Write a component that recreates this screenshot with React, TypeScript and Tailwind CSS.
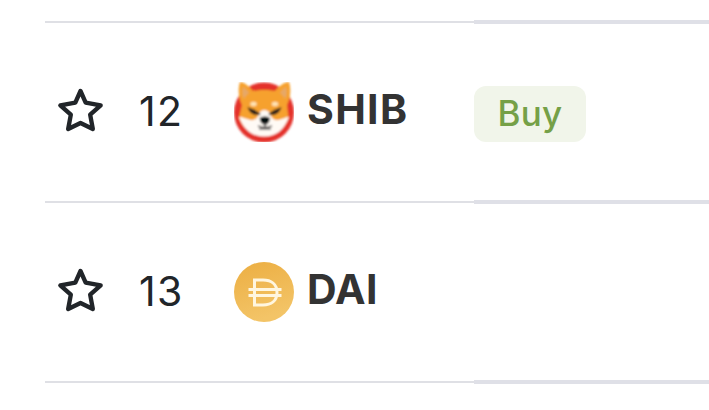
import React from "react";

function Star() {
  return (
    <svg viewBox="51 51 141 141" className="h-[47px] w-[47px]" fill="none" stroke="#212529" strokeWidth="13" strokeLinejoin="round">
      <path d="M121.5 63L137 98L182 106L150.500 134L158.500 177L121.500 159L84.500 177L92.500 134L61 106L106 98Z" />
    </svg>
  );
}

function ShibIcon() {
  return (
    <svg viewBox="0 0 60 60" className="h-[60px] w-[60px]">
      <defs>
        <filter id="soft" x="-5%" y="-5%" width="110%" height="110%">
          <feGaussianBlur stdDeviation="0.850" />
        </filter>
      </defs>
      <g filter="url(#soft)">
        <circle cx="30" cy="30.500" r="30" fill="#e4302c" />
        <path d="M6 0C10 0 15 4 19 9C26 7.500 35 7.500 41 9C45 4 50 0 55 0C57 6 57 15 53 23L54.500 36C50 47 42 53.500 30 53.500C19 53.500 9 47 5 36L8 23C4 15 4 6 6 0Z" fill="#f6a12e" />
        <path d="M9 5C12 7 13 8 15 11C12 13 11 15 10 17C8 13 8 9 9 5ZM52 5C49 7 48 8 46 11C49 13 50 15 51 17C53 13 53 9 52 5Z" fill="#e6a868" />
        <path d="M5 35C9 35 12 37 16 38C22 39 24 35 26 30Q30 26 35 30C37 35 39 39 45 38C49 37 52 35 55 35C50 48 42 54.500 30 54.500C18 54.500 10 48 5 35Z" fill="#fffaf5" />
        <ellipse cx="19.500" cy="22" rx="3.200" ry="2.200" fill="#ffe4b4" />
        <ellipse cx="41" cy="22" rx="3.200" ry="2.200" fill="#ffe4b4" />
        <path d="M15 26.500C19 27.500 22 29 25 32Q18 33 15 26.500ZM46 26.500C42 27.500 39 29 36 32Q43 33 46 26.500Z" fill="#2a211d" stroke="#2a211d" strokeWidth="1.800" />
        <path d="M27 36.500Q31 35 34.500 36.500Q35 40 31 42Q27 40 27 36.500Z" fill="#05080d" stroke="#05080d" strokeWidth="2.400" />
        <path d="M31 41V45M24 44Q31 47 38 44M25 47H37" fill="none" stroke="#605c5b" strokeWidth="1.700" />
      </g>
    </svg>
  );
}

function DaiIcon() {
  return (
    <svg viewBox="0 0 60 60" className="h-[60px] w-[60px]">
      <defs>
        <linearGradient id="gold" x1="0" y1="0" x2="0.300" y2="1">
          <stop stopColor="#ecae42" />
          <stop offset="1" stopColor="#f3c467" />
        </linearGradient>
        <filter id="daiSoft">
          <feGaussianBlur stdDeviation="0.700" />
        </filter>
      </defs>
      <circle cx="30" cy="30" r="30" fill="url(#gold)" />
      <path d="M20.500 18H29C37 18 43 22 43 30.500S37 43 29 43H20.500ZM14.500 27.500H47.500M14.500 33.500H47.500M20.500 18V43" fill="none" stroke="#fff6df" strokeWidth="3" filter="url(#daiSoft)" />
    </svg>
  );
}

interface RowProps {
  rank: number;
  symbol: string;
  icon: React.ReactNode;
  tracking: string;
  signal?: string;
}

function Divider() {
  return (
    <div className="flex h-1 items-center">
      <div className="h-0.5 w-[429px] bg-[#dfe0e5]" />
      <div className="h-1 flex-1 bg-[#dfe0e7]" />
    </div>
  );
}

function CoinRow({ rank, symbol, icon, tracking, signal }: RowProps) {
  return (
    <>
      <div className="flex h-44 items-center">
        <div className="ml-3 mb-1 w-[82px]"><Star /></div>
        <div className="mb-0.5 w-[95px] text-[41px] leading-[50px] tracking-[1.200px] text-[#212529]">{rank}</div>
        <div className="w-[73px]">{icon}</div>
        <div className={`mb-1.5 w-[167px] text-[41px] leading-[50px] font-bold text-[#333] ${tracking}`}>{symbol}</div>
        {signal && (
          <div className="mt-1 flex h-14 w-28 items-center justify-center rounded-xl bg-[#f1f5ea] pb-0.5 text-[35px] font-medium tracking-[0.2px] text-[#75a047]">{signal}</div>
        )}
      </div>
      <Divider />
    </>
  );
}

export default function App() {
  return (
    <main className="h-[410px] w-[709px] overflow-hidden bg-white pt-5 pl-[45px] font-['Inter','Liberation_Sans',sans-serif]">
      <Divider />
      <CoinRow rank={12} symbol="SHIB" icon={<ShibIcon />} tracking="tracking-[1.300px]" signal="Buy" />
      <CoinRow rank={13} symbol="DAI" icon={<DaiIcon />} tracking="tracking-[0.200px]" />
    </main>
  );
}
